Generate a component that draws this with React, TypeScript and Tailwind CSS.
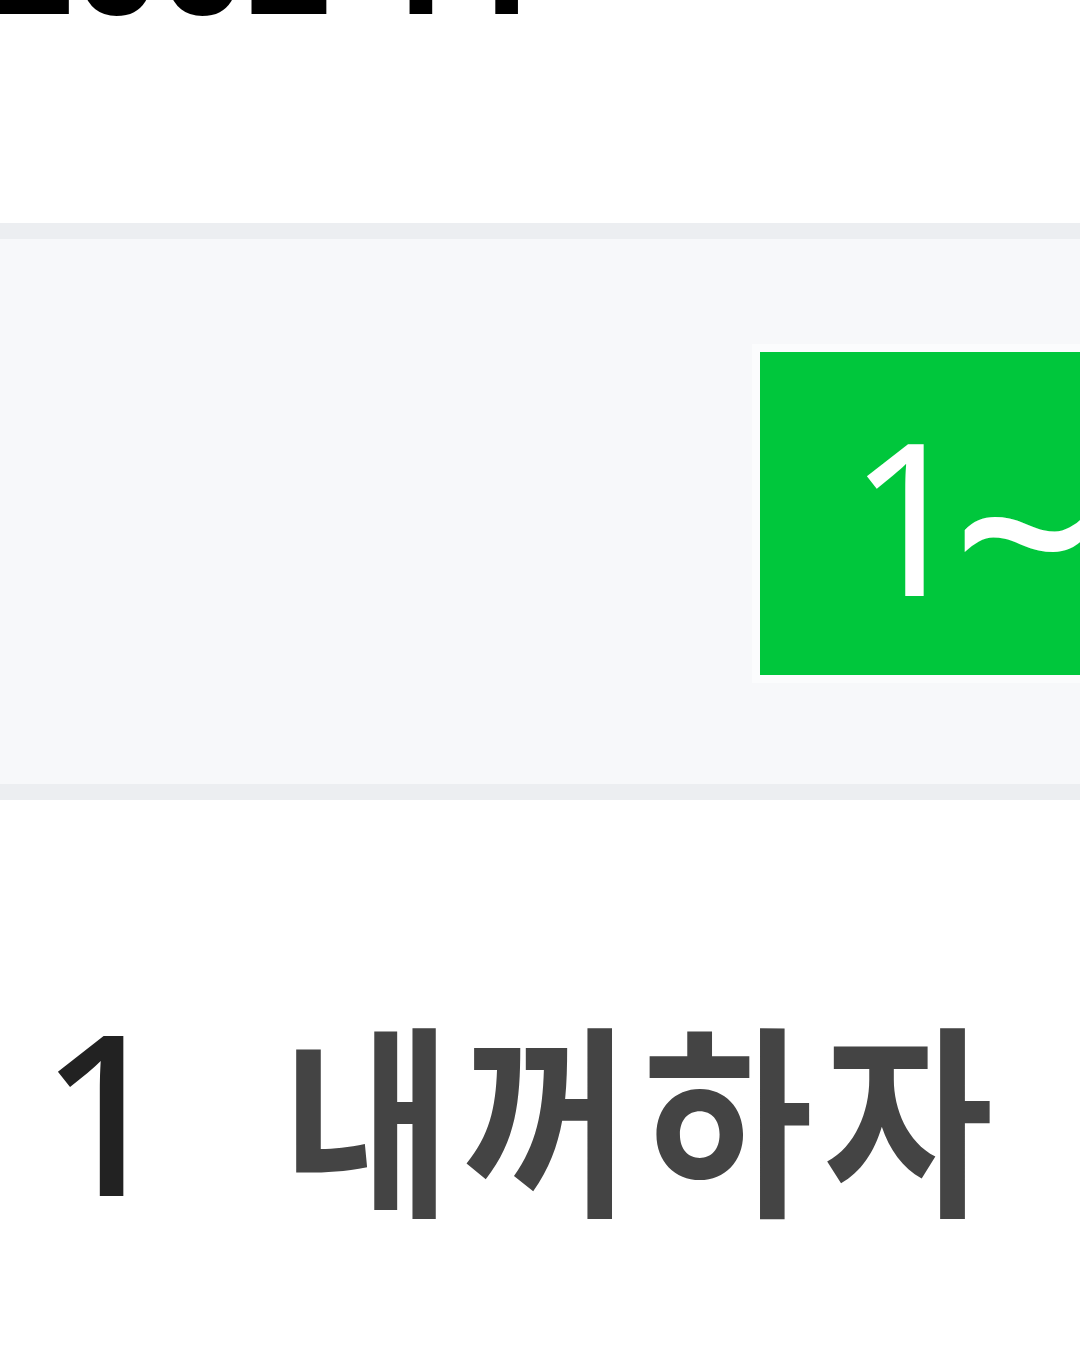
export default function App() {
  return (
    <div className="w-[1080px] h-[1346px] bg-white overflow-hidden font-['Noto_Sans','Noto_Sans_CJK_KR',sans-serif]">
      {/* 제목 (아래쪽만 보임) */}
      <div className="h-[223px] overflow-hidden">
        <div className="-mt-[119px] -ml-[12px] text-[150px] leading-none font-bold text-black whitespace-nowrap">
          2002 11
        </div>
      </div>

      {/* 순위 탭 영역 */}
      <div className="h-[577px] bg-[#f7f8fa] border-y-[16px] border-[#eceef1] flex items-center">
        <div className="ml-[752px] mt-[4px] border-[8px] border-[#fbfcfd] border-r-0">
          <div className="w-[400px] h-[323px] bg-[#00c73c] flex items-center pl-[88px] text-white text-[213px] leading-none font-normal tracking-[-0.08em]">
            1<span className="text-[250px] font-medium mt-[22px]">~</span>50
          </div>
        </div>
      </div>

      {/* 차트 리스트 */}
      <div className="flex items-center h-[320px] mt-[150px] pl-[40px]">
        <span className="w-[242px] shrink-0 text-[224px] leading-none text-[#222] font-medium">1</span>
        <span className="origin-left scale-x-[0.9] whitespace-nowrap text-[205px] leading-none font-bold text-[#444] tracking-[12px] font-['Noto_Sans_CJK_KR',sans-serif]">
          내꺼하자
        </span>
      </div>
    </div>
  );
}
